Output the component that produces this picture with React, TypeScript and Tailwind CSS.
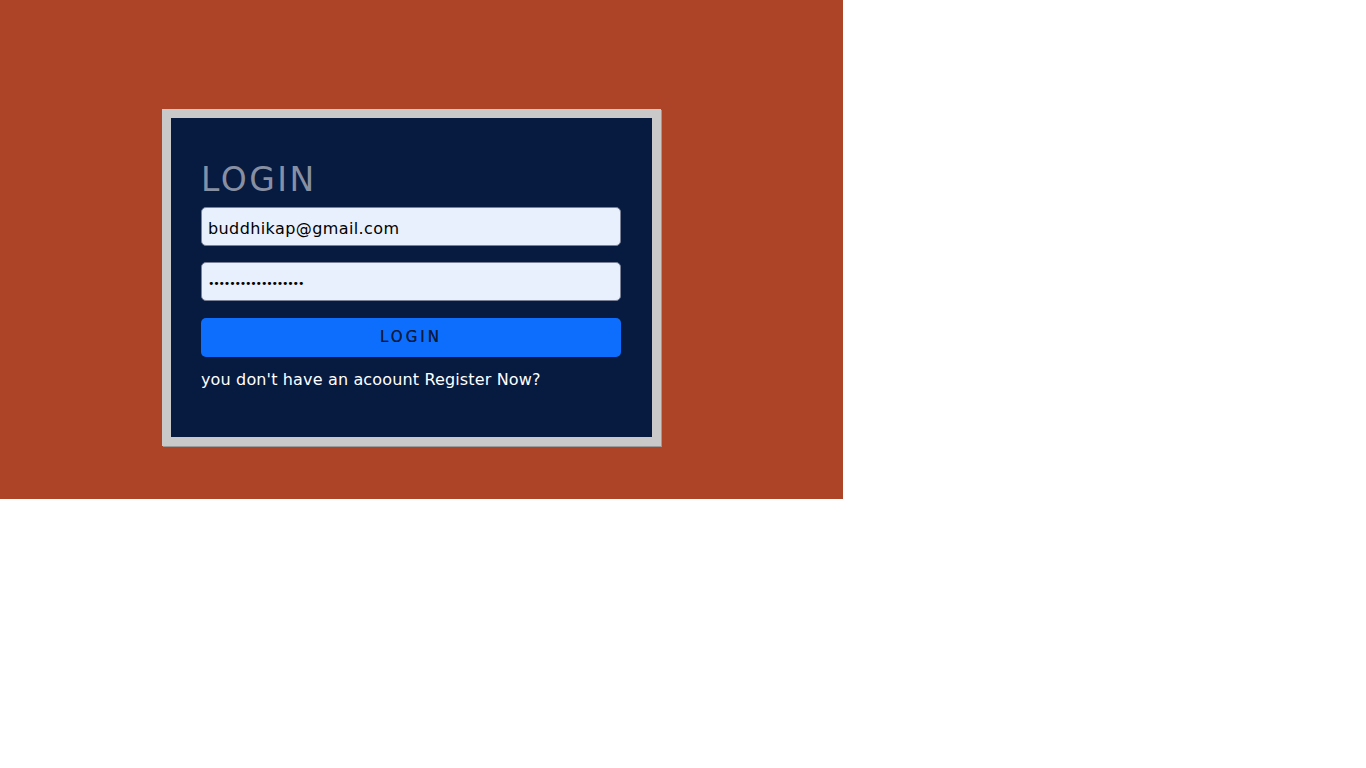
import { useState } from 'react';

export default function App() {
  const [email, setEmail] = useState('buddhikap@gmail.com');
  const [password, setPassword] = useState('buddhika1234567890');

  return (
    <div className="min-h-screen bg-white" style={{ fontFamily: '"DejaVu Sans", "Open Sans", sans-serif' }}>
      <section className="w-[843px] h-[499px] bg-[#ad4427] pt-[109px] pl-[162px]">
        <div className="w-[499px] border-[9px] border-[#c9c9c9] shadow-[1px_1px_0_#9a9a9a]">
          <form
            className="bg-[#071a40] px-[30px] pt-[42px] pb-[47px] flex flex-col"
            onSubmit={(e) => e.preventDefault()}
          >
            <h1 className="text-[33px] leading-[40px] tracking-[2.5px] text-[#8790a3] mb-[7px]">LOGIN</h1>
            <input
              type="email"
              value={email}
              onChange={(e) => setEmail(e.target.value)}
              className="w-[420px] h-[39px] rounded-[5px] border border-[#7a8196] bg-[#e8f0fe] px-[6px] pt-[4px] pb-0 text-[16px] tracking-[0.4px] text-black outline-none"
            />
            <input
              type="password"
              value={password}
              onChange={(e) => setPassword(e.target.value)}
              className="mt-[16px] w-[420px] h-[39px] rounded-[5px] border border-[#7a8196] bg-[#e8f0fe] px-[6px] pt-[4px] pb-0 text-[11px] tracking-[-1.2px] text-black outline-none"
            />
            <button
              type="submit"
              className="mt-[17px] w-[420px] h-[39px] rounded-[5px] bg-[#0d6efd] text-[15px] font-normal tracking-[3px] text-[#0a1c3d] [text-shadow:0_0_0.4px_#0a1c3d]"
            >
              LOGIN
            </button>
            <p className="mt-[13px] text-[16px] leading-[20px] tracking-[0.15px] text-white">
              you don't have an acoount Register Now?
            </p>
          </form>
        </div>
      </section>
    </div>
  );
}
